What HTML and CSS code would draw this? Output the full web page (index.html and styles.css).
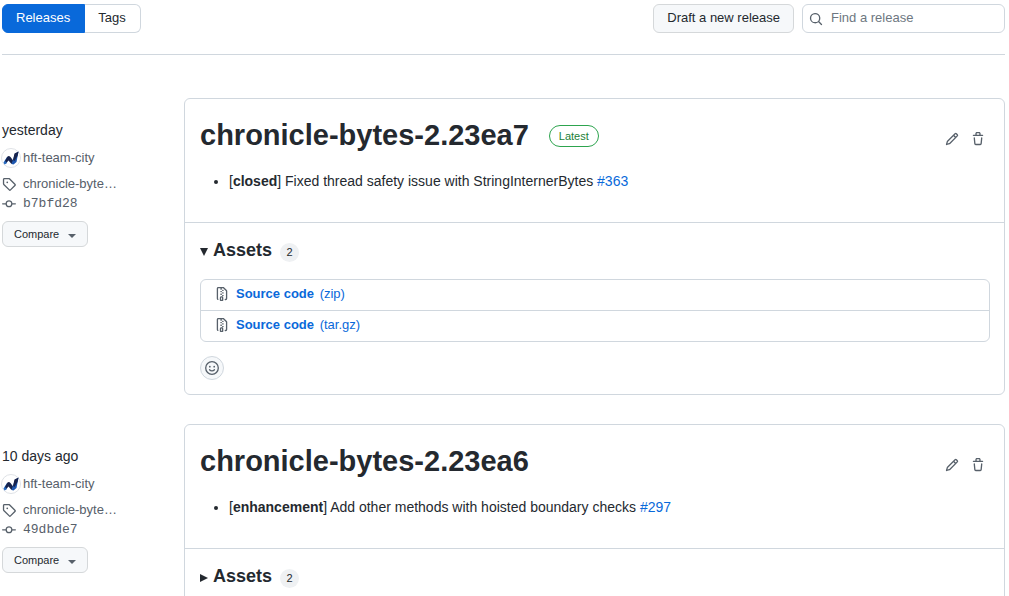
FILE: index.html
```html
<!DOCTYPE html>
<html lang="en">
<head>
    <meta charset="UTF-8">
    <meta name="viewport" content="width=device-width, initial-scale=1.0">
    <title>Releases</title>
    <link rel="stylesheet" href="styles.css">
</head>
<body>

<!-- Shared icons -->
<svg class="sprite" aria-hidden="true">
    <symbol id="icon-search" viewBox="0 0 16 16"><path d="M10.68 11.74a6 6 0 0 1-7.922-8.982 6 6 0 0 1 8.982 7.922l3.04 3.04a.749.749 0 0 1-.326 1.275.749.749 0 0 1-.734-.215ZM11.5 7a4.499 4.499 0 1 0-8.997 0A4.499 4.499 0 0 0 11.5 7Z"/></symbol>
    <symbol id="icon-pencil" viewBox="0 0 16 16"><path d="M11.013 1.427a1.75 1.75 0 0 1 2.474 0l1.086 1.086a1.75 1.75 0 0 1 0 2.474l-8.61 8.61c-.21.21-.47.364-.756.445l-3.251.93a.75.75 0 0 1-.927-.928l.929-3.25c.081-.286.235-.547.445-.758l8.61-8.61Zm.176 4.823L9.75 4.81l-6.286 6.287a.253.253 0 0 0-.064.108l-.558 1.953 1.953-.558a.253.253 0 0 0 .108-.064Zm1.238-3.763a.25.25 0 0 0-.354 0L10.811 3.75l1.439 1.44 1.263-1.263a.25.25 0 0 0 0-.354Z"/></symbol>
    <symbol id="icon-trash" viewBox="0 0 16 16"><path d="M11 1.75V3h2.25a.75.75 0 0 1 0 1.5H2.75a.75.75 0 0 1 0-1.5H5V1.75C5 .784 5.784 0 6.75 0h2.5C10.216 0 11 .784 11 1.75ZM4.496 6.675l.66 6.6a.25.25 0 0 0 .249.225h5.19a.25.25 0 0 0 .249-.225l.66-6.6a.75.75 0 0 1 1.492.149l-.66 6.6A1.748 1.748 0 0 1 10.595 15h-5.19a1.75 1.75 0 0 1-1.741-1.575l-.66-6.6a.75.75 0 1 1 1.492-.15ZM6.5 1.75V3h3V1.75a.25.25 0 0 0-.25-.25h-2.5a.25.25 0 0 0-.25.25Z"/></symbol>
    <symbol id="icon-tag" viewBox="0 0 16 16"><path d="M1 7.775V2.75C1 1.784 1.784 1 2.75 1h5.025c.464 0 .91.184 1.238.513l6.25 6.25a1.75 1.75 0 0 1 0 2.474l-5.026 5.026a1.75 1.75 0 0 1-2.474 0l-6.25-6.25A1.752 1.752 0 0 1 1 7.775Zm1.5 0c0 .066.026.13.073.177l6.25 6.25a.25.25 0 0 0 .354 0l5.025-5.025a.25.25 0 0 0 0-.354l-6.25-6.25a.25.25 0 0 0-.177-.073H2.75a.25.25 0 0 0-.25.25ZM6 5a1 1 0 1 1 0 2 1 1 0 0 1 0-2Z"/></symbol>
    <symbol id="icon-commit" viewBox="0 0 16 16"><path d="M11.93 8.5a4.002 4.002 0 0 1-7.86 0H.75a.75.75 0 0 1 0-1.5h3.32a4.002 4.002 0 0 1 7.86 0h3.32a.75.75 0 0 1 0 1.5Zm-1.43-.75a2.5 2.5 0 1 0-5 0 2.5 2.5 0 0 0 5 0Z"/></symbol>
    <symbol id="icon-zip" viewBox="0 0 16 16"><path d="M3.5 1.75v11.5c0 .09.048.173.126.217a.75.75 0 0 1-.752 1.298A1.748 1.748 0 0 1 2 13.25V1.75C2 .784 2.784 0 3.75 0h5.586c.464 0 .909.185 1.237.513l2.914 2.914c.329.328.513.773.513 1.237v8.586A1.75 1.75 0 0 1 12.25 15h-.5a.75.75 0 0 1 0-1.5h.5a.25.25 0 0 0 .25-.25V4.664a.25.25 0 0 0-.073-.177L9.513 1.573a.25.25 0 0 0-.177-.073H7.25a.75.75 0 0 1 0 1.5h-.5a.75.75 0 0 1 0-1.5h-3a.25.25 0 0 0-.25.25Zm3.75 8.75h.5c.966 0 1.75.784 1.75 1.75v3a.75.75 0 0 1-.75.75h-2.5a.75.75 0 0 1-.75-.75v-3c0-.966.784-1.75 1.75-1.75ZM6 5.25a.75.75 0 0 1 .75-.75h.5a.75.75 0 0 1 0 1.5h-.5A.75.75 0 0 1 6 5.25Zm.75 2.25h.5a.75.75 0 0 1 0 1.5h-.5a.75.75 0 0 1 0-1.5ZM8 6.75A.75.75 0 0 1 8.75 6h.5a.75.75 0 0 1 0 1.5h-.5A.75.75 0 0 1 8 6.75ZM8.75 3h.5a.75.75 0 0 1 0 1.5h-.5a.75.75 0 0 1 0-1.5ZM8 9.75A.75.75 0 0 1 8.75 9h.5a.75.75 0 0 1 0 1.5h-.5A.75.75 0 0 1 8 9.75Zm-1 2.5v2.25h1v-2.25a.25.25 0 0 0-.25-.25h-.5a.25.25 0 0 0-.25.25Z"/></symbol>
    <symbol id="icon-smiley" viewBox="0 0 16 16">
        <circle cx="8" cy="8" r="7.2" fill="none" stroke="currentColor" stroke-width="1.5"/>
        <circle cx="5.5" cy="6.5" r="1"/>
        <circle cx="10.5" cy="6.5" r="1"/>
        <path d="M5.2 10c1.4 1.7 4.2 1.7 5.6 0" fill="none" stroke="currentColor" stroke-width="1.5" stroke-linecap="round"/>
    </symbol>
    <symbol id="icon-avatar" viewBox="0 0 20 20">
        <circle cx="10" cy="10" r="9.5" fill="#fff" stroke="#dfe2e6"/>
        <path d="M2.5 14.5 6 9 8.5 9 5.500 15.500 3.500 16.500z" fill="#2468c0"/>
        <path d="M4 13 6.500 8.500Q8 7.500 9.500 9L12.500 13 10.500 16 7.500 12.500 5.500 14.500z" fill="#17234d"/>
        <path d="M10.500 16 14 6 17.500 3.500 15.500 14 12.500 16.500z" fill="#1d57b0"/>
        <path d="M12 12 13.500 5.500 17.500 3.500 16.500 8 13.500 13z" fill="#17234d"/>
    </symbol>
</svg>

<header class="toolbar">
    <nav class="tabs">
        <a class="tab active" href="#releases">Releases</a>
        <a class="tab" href="#tags">Tags</a>
    </nav>
    <div class="actions">
        <button class="btn" type="button">Draft a new release</button>
        <label class="search">
            <svg class="icon"><use href="#icon-search"/></svg>
            <input type="text" placeholder="Find a release" aria-label="Find a release">
        </label>
    </div>
</header>

<main>
    <section class="release">
        <div class="meta">
            <p class="date">yesterday</p>
            <a class="author" href="#author"><svg class="avatar"><use href="#icon-avatar"/></svg>hft-team-city</a>
            <a class="ref" href="#tag"><svg class="icon"><use href="#icon-tag"/></svg><span class="tag-name">chronicle-byte…</span></a>
            <a class="ref commit" href="#commit"><svg class="icon"><use href="#icon-commit"/></svg><code>b7bfd28</code></a>
            <button class="btn btn-compare" type="button">Compare <span class="caret"></span></button>
        </div>
        <article class="card">
            <div class="card-body">
                <div class="card-title">
                    <h1>chronicle-bytes-2.23ea7</h1>
                    <span class="label">Latest</span>
                    <div class="card-tools">
                        <button class="icon-btn" type="button" aria-label="Edit"><svg class="icon"><use href="#icon-pencil"/></svg></button>
                        <button class="icon-btn" type="button" aria-label="Delete"><svg class="icon"><use href="#icon-trash"/></svg></button>
                    </div>
                </div>
                <ul class="notes">
                    <li>[<strong>closed</strong>] Fixed thread safety issue with StringInternerBytes <a href="#363">#363</a></li>
                </ul>
            </div>
            <div class="card-footer">
                <details open>
                    <summary><span class="arrow"></span><span class="assets-title">Assets</span><span class="counter">2</span></summary>
                    <ul class="assets">
                        <li><svg class="icon"><use href="#icon-zip"/></svg><a href="#zip"><strong>Source code</strong> (zip)</a></li>
                        <li><svg class="icon"><use href="#icon-zip"/></svg><a href="#targz"><strong>Source code</strong> (tar.gz)</a></li>
                    </ul>
                </details>
                <button class="reaction" type="button" aria-label="Add reaction"><svg class="icon"><use href="#icon-smiley"/></svg></button>
            </div>
        </article>
    </section>

    <section class="release">
        <div class="meta">
            <p class="date">10 days ago</p>
            <a class="author" href="#author"><svg class="avatar"><use href="#icon-avatar"/></svg>hft-team-city</a>
            <a class="ref" href="#tag"><svg class="icon"><use href="#icon-tag"/></svg><span class="tag-name">chronicle-byte…</span></a>
            <a class="ref commit" href="#commit"><svg class="icon"><use href="#icon-commit"/></svg><code>49dbde7</code></a>
            <button class="btn btn-compare" type="button">Compare <span class="caret"></span></button>
        </div>
        <article class="card">
            <div class="card-body">
                <div class="card-title">
                    <h1>chronicle-bytes-2.23ea6</h1>
                    <div class="card-tools">
                        <button class="icon-btn" type="button" aria-label="Edit"><svg class="icon"><use href="#icon-pencil"/></svg></button>
                        <button class="icon-btn" type="button" aria-label="Delete"><svg class="icon"><use href="#icon-trash"/></svg></button>
                    </div>
                </div>
                <ul class="notes">
                    <li>[<strong>enhancement</strong>] Add other methods with hoisted boundary checks <a href="#297">#297</a></li>
                </ul>
            </div>
            <div class="card-footer">
                <details>
                    <summary><span class="arrow"></span><span class="assets-title">Assets</span><span class="counter">2</span></summary>
                </details>
            </div>
        </article>
    </section>
</main>

</body>
</html>
```
FILE: styles.css
```css
* {
    box-sizing: border-box;
}
body {
    margin: 0;
    padding: 4px 4px 0 2px;
    font-family: "Liberation Sans", Arial, sans-serif;
    font-size: 14px;
    line-height: 22px;
    color: #24292f;
    background-color: #fff;
}
a {
    color: #0969da;
    text-decoration: none;
}
button {
    font-family: inherit;
    color: inherit;
    cursor: pointer;
}
.sprite {
    display: none;
}
.icon {
    flex: none;
    width: 14px;
    height: 14px;
    fill: currentColor;
    color: #57606a;
}

/* Toolbar */
.toolbar {
    display: flex;
    justify-content: space-between;
    padding-bottom: 21px;
    border-bottom: 1px solid #d0d7de;
}
.tabs {
    display: flex;
}
.tab {
    padding: 0 14px 2px 13px;
    border: 1px solid #d0d7de;
    border-left: 0;
    border-radius: 0 6px 6px 0;
    font-size: 13px;
    line-height: 25px;
    color: #24292f;
}
.tab.active {
    border: 1px solid #0969da;
    border-radius: 6px 0 0 6px;
    color: #fff;
    background-color: #0969da;
}
.actions {
    display: flex;
    gap: 8px;
}
.btn {
    height: 29px;
    padding: 0 13px 2px;
    border: 1px solid #d5d8da;
    border-radius: 6px;
    font-size: 13px;
    background-color: #f6f8fa;
}
.search {
    display: flex;
    align-items: center;
    width: 203px;
    height: 29px;
    padding: 0 6px;
    border: 1px solid #d0d7de;
    border-radius: 6px;
}
.search input {
    flex: 1;
    min-width: 0;
    padding: 0 0 2px 8px;
    border: 0;
    outline: none;
    font-family: inherit;
    font-size: 13px;
    background: none;
}
.search input::placeholder {
    color: #6e7781;
}

/* Releases */
.release {
    display: grid;
    grid-template-columns: 152px 1fr;
    column-gap: 30px;
    margin-top: 29px;
}
.release:first-child {
    margin-top: 43px;
}
.meta {
    display: flex;
    flex-direction: column;
    align-items: flex-start;
    padding-top: 21px;
    font-size: 13px;
}
.meta a {
    color: #57606a;
}
.date {
    margin: 0 0 7px;
    font-size: 14px;
}
.author,
.ref {
    display: flex;
    align-items: center;
    gap: 7px;
    line-height: 20px;
}
.author {
    gap: 2px;
    margin-bottom: 6px;
}
.avatar {
    width: 20px;
    height: 20px;
    margin-left: -1px;
}
.tag-name {
    white-space: nowrap;
}
.commit code {
    font-family: "Liberation Mono", monospace;
    font-size: 13px;
}
.btn-compare {
    display: flex;
    align-items: center;
    gap: 9px;
    height: 26px;
    margin-top: 7px;
    padding: 0 11px;
    font-size: 11px;
}
.caret {
    margin-top: 3px;
    border: 4px solid transparent;
    border-top-color: #57606a;
    border-bottom: 0;
}

/* Release card */
.card {
    border: 1px solid #d0d7de;
    border-radius: 6px;
}
.card-body {
    padding: 15px 15px 30px;
    border-bottom: 1px solid #d0d7de;
}
.card-title {
    display: flex;
    align-items: center;
}
.card-title h1 {
    margin: 0;
    font-size: 29px;
    line-height: 42px;
}
.label {
    margin-left: 20px;
    margin-top: 2px;
    padding: 0 9px;
    border: 1px solid #2da44e;
    border-radius: 11px;
    font-size: 11px;
    line-height: 20px;
    color: #1a7f37;
}
.card-tools {
    display: flex;
    gap: 4px;
    margin-left: auto;
    padding-top: 8px;
}
.icon-btn {
    display: flex;
    padding: 4px;
    border: 0;
    background: none;
}
.notes {
    margin: 14px 0 0;
    padding-left: 29px;
}
.card-footer {
    padding: 14px 14px 14px 15px;
}
summary {
    display: flex;
    align-items: center;
    list-style: none;
    cursor: pointer;
}
.arrow {
    width: 8px;
    height: 8px;
    margin: 4px 5px 0 0;
    background-color: #24292f;
    clip-path: polygon(0 0, 100% 50%, 0 100%);
}
details[open] .arrow {
    clip-path: polygon(0 0, 100% 0, 50% 100%);
}
.assets-title {
    font-size: 18px;
    font-weight: bold;
    line-height: 26px;
}
.counter {
    min-width: 19px;
    margin: 4px 0 0 8px;
    border-radius: 10px;
    font-size: 11px;
    line-height: 19px;
    text-align: center;
    background-color: #eff1f3;
}
.assets {
    margin: 16px 0 14px;
    padding: 0;
    border: 1px solid #d0d7de;
    border-radius: 6px;
    list-style: none;
    font-size: 13px;
}
.assets li {
    display: flex;
    align-items: center;
    gap: 7px;
    padding: 3px 14px 5px;
}
.assets li + li {
    border-top: 1px solid #d0d7de;
}
.assets strong {
    margin-right: 2px;
}
.reaction {
    display: flex;
    padding: 4px;
    border: 1px solid #d0d7de;
    border-radius: 50%;
    background-color: #f6f8fa;
}
```
